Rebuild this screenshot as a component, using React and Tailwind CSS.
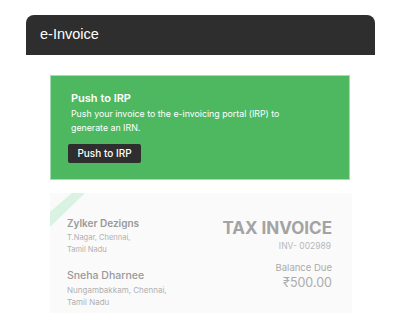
export default function App() {
  return (
    <div className="w-[400px] h-[323px] bg-white overflow-hidden pt-[15px]" style={{ fontFamily: 'Inter, "Noto Sans", sans-serif' }}>
      {/* Header */}
      <div className="ml-[26px] w-[349px] h-[40px] bg-[#2e2e2e] rounded-t-[8px] flex items-center pl-[14px]">
        <span className="text-white text-[14.5px]" style={{ fontFamily: '"Liberation Sans", Arial, sans-serif' }}>e-Invoice</span>
      </div>

      {/* Push to IRP */}
      <div className="ml-[50px] mt-[20px] w-[300px] h-[105px] bg-[#4db860] border border-[#a6dcb2] pl-[20px] pt-[14px]">
        <h2 className="text-white text-[11px] font-semibold leading-[16px]">Push to IRP</h2>
        <p className="text-white text-[8.8px] leading-[14px] mt-[1px] w-[230px]">
          Push your invoice to the e-invoicing portal (IRP) to generate an IRN.
        </p>
        <button className="mt-[9px] -ml-[3px] h-[19px] w-[73px] bg-[#2e2e2e] rounded-[2px] text-white text-[10px] font-medium flex items-center justify-center">
          Push to IRP
        </button>
      </div>

      {/* Invoice preview */}
      <div className="relative ml-[50px] mt-[13px] w-[302px] h-[120px] bg-[#fafafa] flex justify-between pl-[17px] pr-[20px] pt-[23px]">
        <svg className="absolute left-0 top-0" width="36" height="36" viewBox="0 0 36 36">
          <polygon points="22,0 35,0 0,34 0,19" fill="#d9f2e2" />
        </svg>
        <div>
          <div className="text-[10px] font-semibold text-[#999999] leading-[14px]">Zylker Dezigns</div>
          <div className="text-[7.5px] text-[#b0b0b0] leading-[12px] mt-[2px]">T.Nagar, Chennai,</div>
          <div className="text-[7.5px] text-[#b0b0b0] leading-[12px]">Tamil Nadu</div>
          <div className="text-[10.5px] font-medium text-[#999999] leading-[14px] mt-[13px]">Sneha Dharnee</div>
          <div className="text-[8px] text-[#b0b0b0] leading-[12px] mt-[1px]">Nungambakkam, Chennai,</div>
          <div className="text-[8px] text-[#b0b0b0] leading-[12px]">Tamil Nadu</div>
        </div>
        <div className="flex flex-col items-end">
          <div className="text-[17px] font-bold text-[#a3a3a3] leading-[22px] mt-[1px]">TAX INVOICE</div>
          <div className="text-[8.5px] text-[#b8b8b8] leading-[12px] mt-[1px] mr-[1px]">INV- 002989</div>
          <div className="text-[9.5px] text-[#ababab] leading-[12px] mt-[10px]">Balance Due</div>
          <div className="text-[12.5px] text-[#ababab] leading-[16px] mt-[1px]">₹500.00</div>
        </div>
      </div>
    </div>
  )
}
